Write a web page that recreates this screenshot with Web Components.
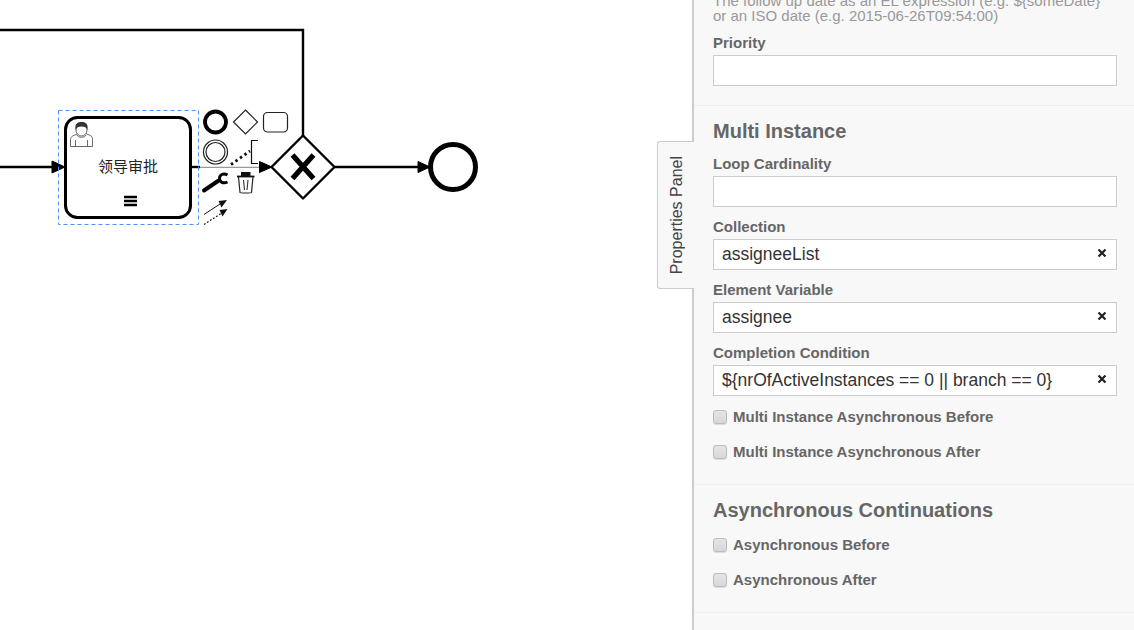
<!DOCTYPE html>
<html><head><meta charset="utf-8">
<style>
html,body{margin:0;padding:0;height:630px;overflow:hidden;background:#fff;font-family:"Liberation Sans",Arial,sans-serif}
</style></head>
<body>
<bpmn-app>
  <bpmn-canvas slot="canvas"></bpmn-canvas>
  <prop-panel slot="panel">
    <prop-group first>
      <prop-help>The follow up date as an EL expression (e.g. ${someDate}<br>or an ISO date (e.g. 2015-06-26T09:54:00)</prop-help>
      <prop-field label="Priority"></prop-field>
    </prop-group>
    <prop-group title="Multi Instance">
      <prop-field label="Loop Cardinality"></prop-field>
      <prop-field label="Collection" value="assigneeList"></prop-field>
      <prop-field label="Element Variable" value="assignee"></prop-field>
      <prop-field label="Completion Condition" value="${nrOfActiveInstances == 0 || branch == 0}"></prop-field>
      <prop-check label="Multi Instance Asynchronous Before"></prop-check>
      <prop-check label="Multi Instance Asynchronous After"></prop-check>
    </prop-group>
    <prop-group title="Asynchronous Continuations">
      <prop-check label="Asynchronous Before" lead></prop-check>
      <prop-check label="Asynchronous After"></prop-check>
    </prop-group>
  </prop-panel>
</bpmn-app>
<script>
function def(name, css, html, init){
  customElements.define(name, class extends HTMLElement{
    connectedCallback(){
      if(this.shadowRoot) return;
      const r=this.attachShadow({mode:'open'});
      r.innerHTML='<style>'+css+'</style>'+(typeof html==='function'?html(this):html);
      if(init) init(this,r);
    }
  });
}
def('bpmn-app',
 ':host{display:flex;width:1134px;height:630px;overflow:hidden}',
 '<slot name="canvas"></slot><slot name="panel"></slot>');

def('bpmn-canvas',
 ':host{display:block;flex:none;width:692px;height:630px;position:relative}svg{display:block;overflow:visible}text{font-family:"Liberation Sans","Noto Sans CJK SC",sans-serif}',
 `<svg width="692" height="630" viewBox="0 0 692 630" xmlns="http://www.w3.org/2000/svg" fill="none">
  <!-- flows -->
  <path d="M0 30H303V136" stroke="#000" stroke-width="2.4"/>
  <path d="M0 167H54" stroke="#000" stroke-width="2.4"/>
  <path d="M191 167H200" stroke="#000" stroke-width="2.4"/>
  <path d="M200 167.4H262" stroke="#999" stroke-width="1.4"/>
  <path d="M259.500 161.500 L272 167 L259.500 172.500Z" fill="#000" stroke="#000"/>
  <path d="M335 167H420" stroke="#000" stroke-width="2.4"/>
  <path d="M418 161.500 L430 167 L418 172.500Z" fill="#000" stroke="#000"/>
  <!-- task -->
  <rect x="65.5" y="117.5" width="125" height="100" rx="12" fill="#fff" stroke="#000" stroke-width="3"/>
  <path d="M52 161 L65 167 L52 173Z" fill="#000" stroke="#000"/>
  <rect x="58.5" y="110.5" width="140" height="114" stroke="#4d90ff" stroke-width="1" stroke-dasharray="4 3"/>
  <text x="128" y="171.5" text-anchor="middle" font-size="15" fill="#222">领导审批</text>
  <path d="M124 197H137M124 201H137M124 205H137" stroke="#000" stroke-width="2.400"/>
  <!-- user icon -->
  <path d="M70.5 146.5V139.5C70.5 136.5 73 135.5 76 134.5L78 133.5M86 133.5L88 134.5C91 135.5 92.5 136.5 92.5 139.5V146.5H70.5M75.5 146.5V140M87.5 146.5V140M77 135C78 138 85 138 86 135" stroke="#444" stroke-width=".8"/>
  <ellipse cx="81.5" cy="130" rx="5.5" ry="6" fill="#fff" stroke="#444" stroke-width=".8"/>
  <path d="M75.5 130C74.5 123 78 122 81.5 122C85 122 88.5 123 87.5 130C86.5 127 84.5 126.500 81.500 126.500C78.500 126.500 76.500 127 75.500 130Z" fill="#333"/>
  <!-- gateway -->
  <path d="M303 135.500 L334.500 167 L303 198.500 L271.500 167Z" fill="#fff" stroke="#000" stroke-width="2.4" stroke-linejoin="round"/>
  <path d="M292.500 155 L313.500 178.500M313.500 155 L292.500 178.500" stroke="#000" stroke-width="5.200"/>
  <!-- end event -->
  <circle cx="453" cy="167" r="22.500" fill="#fff" stroke="#000" stroke-width="5"/>
  <!-- context pad -->
  <circle cx="215.500" cy="122" r="10.500" stroke="#000" stroke-width="3.800"/>
  <path d="M245.500 110 L257.500 122 L245.500 134 L233.500 122Z" stroke="#222" stroke-width="1.200"/>
  <rect x="263.500" y="112.500" width="24" height="19.500" rx="4" stroke="#222" stroke-width="1.200"/>
  <circle cx="215.500" cy="152" r="12" stroke="#222" stroke-width="1.200"/>
  <circle cx="215.500" cy="152" r="9.500" stroke="#222" stroke-width="1.200"/>
  <path d="M258 140.500H251.500V163.500H258" stroke="#111" stroke-width="1.200"/>
  <path d="M231 164.500 L250 151" stroke="#111" stroke-width="2.800" stroke-dasharray="2.500 3"/>
  <path d="M204 190.500 L218 181" stroke="#000" stroke-width="4" stroke-linecap="round"/>
  <path d="M227.500 175C223 172.500 219.500 175 219.500 178.500C219.500 182 223 184 227.500 182" stroke="#000" stroke-width="3"/>
  <path d="M237 176.500H254.500" stroke="#111" stroke-width="1.800"/>
  <path d="M241 176V172H250.500V176" fill="#111"/>
  <path d="M238.500 177L240 192.500C240 193 251.500 193 251.500 192.500L253 177" stroke="#222" stroke-width="1.200"/>
  <path d="M243.500 180L244.500 190M248 180L247 190" stroke="#333" stroke-width="1.100"/>
  <path d="M204 214.500L220 204" stroke="#111" stroke-width="1"/>
  <path d="M227 200 L218.500 201 L221.500 207.500Z" fill="#111"/>
  <path d="M204 224.500L221 213.500" stroke="#111" stroke-width="1.200" stroke-dasharray="1.800 1.800"/>
  <path d="M227.500 209 L219.500 210 L222.500 216.500Z" fill="#111"/>
 </svg>`);

def('prop-panel',
 ':host{display:block;position:relative;flex:none;width:440px;height:630px;background:#f8f8f8;border-left:2px solid #ccc;box-sizing:content-box}'+
 '.scroll{height:630px;overflow:hidden}'+
 '.tab{position:absolute;left:-37px;top:141px;width:37px;height:148px;box-sizing:border-box;background:#f8f8f8;border:1px solid #ccc;border-right:0;border-radius:3px 0 0 3px;display:flex;align-items:center;justify-content:center;padding-left:2px}'+
 '.tab span{display:block;white-space:nowrap;writing-mode:vertical-rl;transform:rotate(180deg);font-size:16px;line-height:18px;color:#444}',
 '<div class="scroll"><slot></slot></div><div class="tab"><span>Properties Panel</span></div>');

def('prop-group',
 ':host{display:block;padding:14px 17px 19px 19px;border-bottom:1px solid #eee}'+
 ':host([first]){padding-top:0;margin-top:-7px}'+
 'h3{margin:0 0 14px;font-size:20px;line-height:22px;font-weight:bold;color:#666}',
 el=>(el.getAttribute('title')?'<h3>'+el.getAttribute('title')+'</h3>':'')+'<slot></slot>');

def('prop-help',
 ':host{display:block;font-size:15px;line-height:15px;color:#999;margin-bottom:12px}',
 '<slot></slot>');

def('prop-field',
 ':host{display:block;margin-bottom:12px}'+
 ':host(:last-child){margin-bottom:0}'+
 'label{display:block;font-size:15px;line-height:16px;font-weight:bold;color:#666;margin-bottom:4px}'+
 '.box{position:relative;height:31px;box-sizing:border-box;border:1px solid #ccc;background:#fff;display:flex;align-items:center;padding:0 8px;font-size:17.5px;color:#333;white-space:nowrap}'+
 '.x{position:absolute;right:9px;top:8px;width:10px;height:10px;display:block}',
 el=>{
  const v=el.getAttribute('value');
  const esc=s=>s.replace(/&/g,'&amp;').replace(/</g,'&lt;');
  return '<label>'+esc(el.getAttribute('label'))+'</label><div class="box">'+(v?'<span>'+esc(v)+'</span><svg class="x" viewBox="0 0 10 10"><path d="M1.500 1.500L8.500 8.500M8.500 1.500L1.500 8.500" stroke="#222" stroke-width="2.200"/></svg>':'')+'</div>';
 });

def('prop-check',
 ':host{display:flex;align-items:center;height:16px;margin:1px 0 19px;font-size:15px;font-weight:bold;color:#666;white-space:nowrap}'+
 ':host([lead]){margin-top:15px}'+
 ':host(:last-child){margin-bottom:6px}'+
 'input{appearance:none;-webkit-appearance:none;width:14px;height:14px;margin:2px 6px 0 0;box-sizing:border-box;background:linear-gradient(#e4e4e4,#d8d8d8);border:1px solid #bbb;border-radius:3px;box-shadow:0 1px 0 #ddd;flex:none}',
 el=>'<input type="checkbox"><span>'+el.getAttribute('label')+'</span>');
</script>
</body></html>
